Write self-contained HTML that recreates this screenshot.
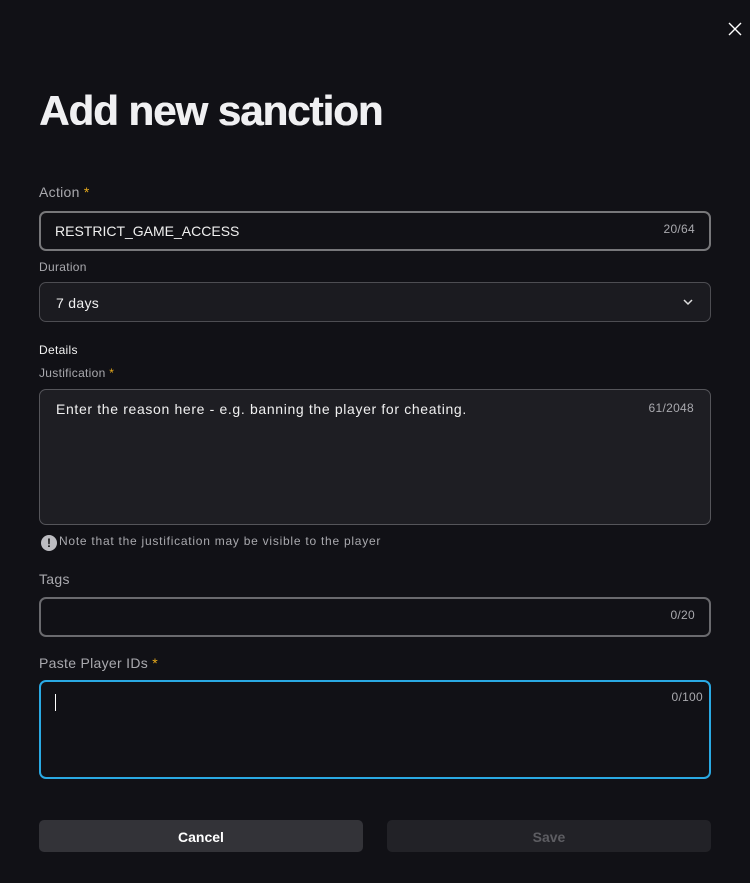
<!DOCTYPE html>
<html><head><style>
body{margin:0;width:750px;height:883px;background:#111116;font-family:"Liberation Sans",sans-serif;position:relative;overflow:hidden;color:#fff}
.a{position:absolute}
.lbl{color:#a9a9ae;font-size:14px;letter-spacing:0.3px}
.star{color:#e6a91c}
.box{position:absolute;left:39px;width:672px;box-sizing:border-box;border-radius:7px}
.cnt{position:absolute;right:16px;color:#a9a9ae;font-size:12px;letter-spacing:0.3px}
</style></head><body>
<svg class="a" style="left:727px;top:22px" width="16" height="14" viewBox="0 0 16 14"><path d="M2 1L14 13M14 1L2 13" stroke="#fff" stroke-width="1.4"/></svg>
<div class="a" style="left:39px;top:87px;font-size:42px;font-weight:bold;letter-spacing:-1px;color:#f0f0f2;text-shadow:0.6px 0 0 #f0f0f2">Add new sanction</div>
<div class="a lbl" style="left:39px;top:184px">Action <span class="star">*</span></div>
<div class="box" style="top:211px;height:40px;border:2px solid #77777a;background:#111116"><div class="a" style="left:14px;top:10px;font-size:14px;color:#f0f0f0">RESTRICT_GAME_ACCESS</div><div class="cnt" style="right:14px;top:9px">20/64</div></div>
<div class="a lbl" style="left:39px;top:260px;font-size:12px">Duration</div>
<div class="box" style="top:282px;height:40px;border:1px solid #4d4d52;background:#1b1b20"><div class="a" style="left:16px;top:12px;font-size:14px;color:#f0f0f0;letter-spacing:0.3px">7 days</div><svg class="a" style="right:16px;top:15px" width="12" height="8" viewBox="0 0 12 8"><path d="M2 2L6 6L10 2" stroke="#ddd" stroke-width="1.5" fill="none"/></svg></div>
<div class="a" style="left:39px;top:343px;font-size:12px;color:#f2f2f2;letter-spacing:0.3px">Details</div>
<div class="a lbl" style="left:39px;top:366px;font-size:12px">Justification <span class="star">*</span></div>
<div class="box" style="top:389px;height:136px;border:1px solid #55555a;background:#1e1e23"><div class="a" style="left:16px;top:11px;font-size:14px;color:#f0f0f0;letter-spacing:0.65px;white-space:nowrap">Enter the reason here - e.g. banning the player for cheating.</div><div class="cnt" style="top:11px">61/2048</div></div>
<div class="a" style="left:41px;top:535px;width:16px;height:16px;border-radius:50%;background:#bdbdc2;color:#111;font-size:12px;font-weight:bold;text-align:center;line-height:16px">!</div>
<div class="a lbl" style="left:59px;top:534px;font-size:12px;letter-spacing:0.75px;white-space:nowrap">Note that the justification may be visible to the player</div>
<div class="a lbl" style="left:39px;top:571px">Tags</div>
<div class="box" style="top:597px;height:40px;border:2px solid #6a6a6e;background:#111116"><div class="cnt" style="right:14px;top:9px">0/20</div></div>
<div class="a lbl" style="left:39px;top:655px">Paste Player IDs <span class="star">*</span></div>
<div class="box" style="top:680px;height:99px;border:2px solid #2aa9e3;background:#111116"><div class="a" style="left:14px;top:12px;width:1px;height:17px;background:#fff"></div><div class="cnt" style="right:6px;top:8px">0/100</div></div>
<div class="a" style="left:39px;top:820px;width:324px;height:32px;background:#333338;border-radius:5px;text-align:center;line-height:34px;font-size:14px;font-weight:bold">Cancel</div>
<div class="a" style="left:387px;top:820px;width:324px;height:32px;background:#222227;border-radius:5px;text-align:center;line-height:34px;font-size:14px;font-weight:bold;color:#5d5d62">Save</div>
</body></html>
